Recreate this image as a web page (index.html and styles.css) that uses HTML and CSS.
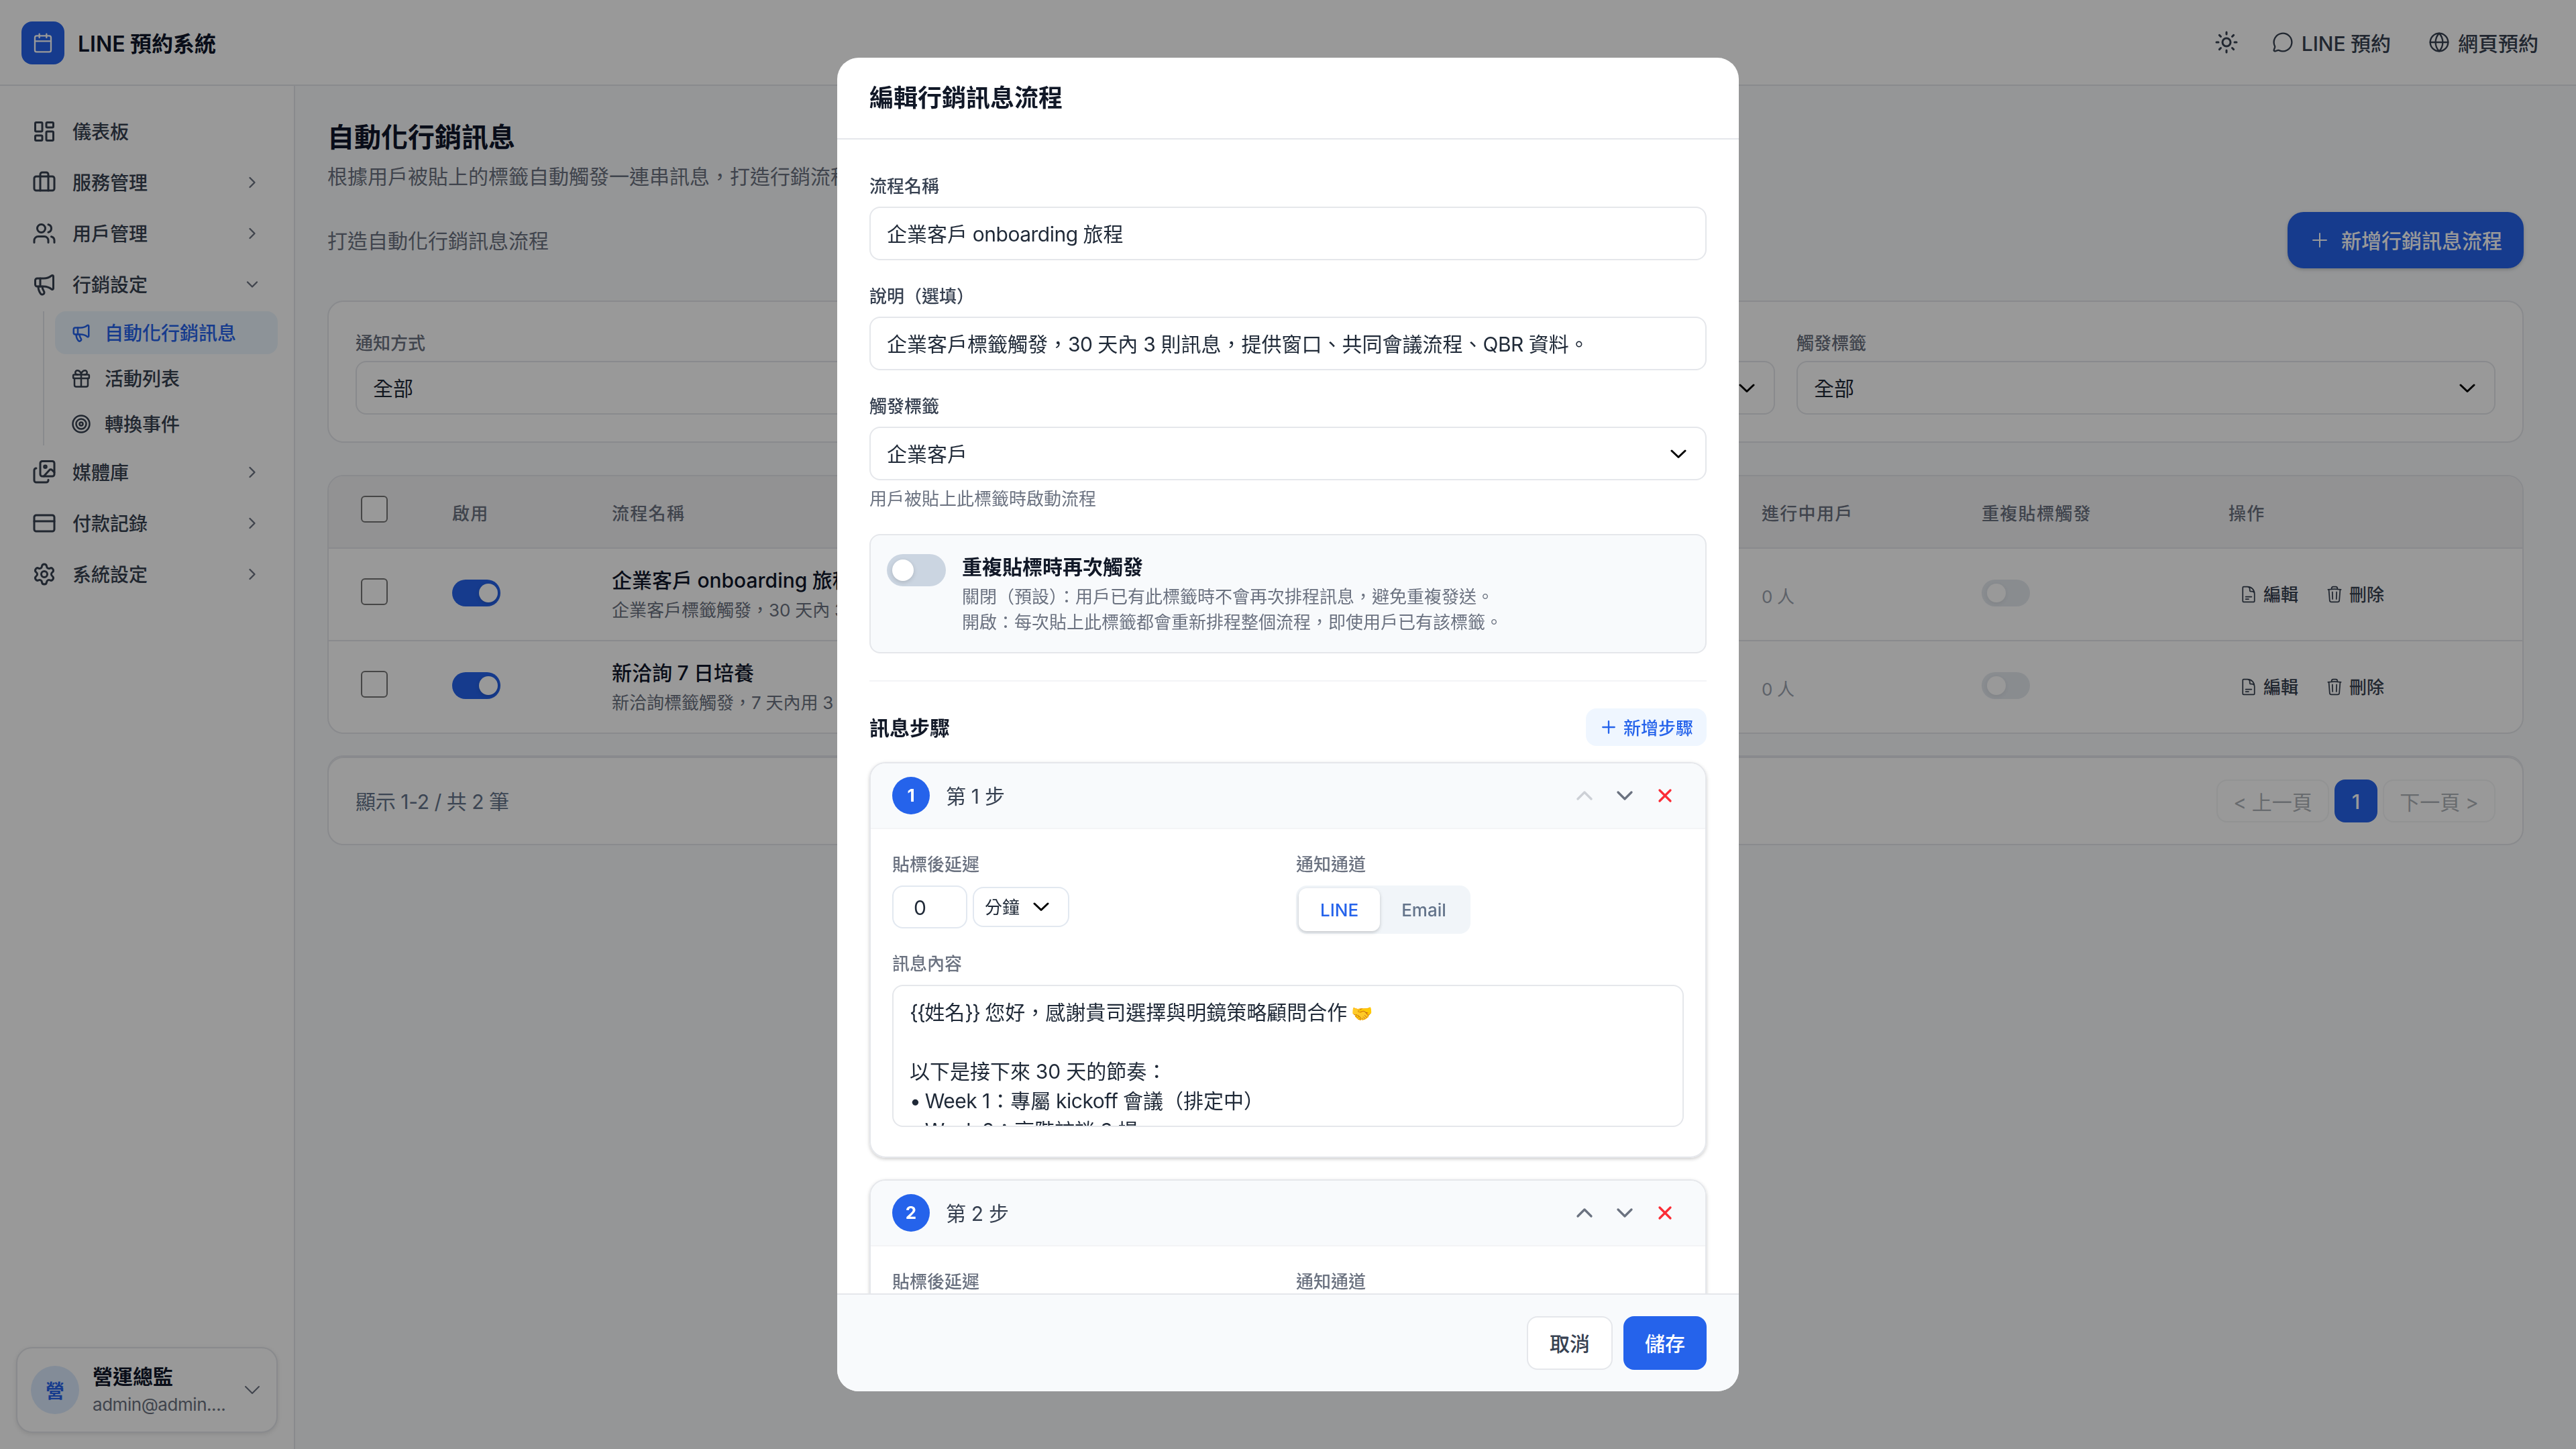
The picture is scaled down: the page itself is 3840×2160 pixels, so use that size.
FILE: index.html
```html
<!DOCTYPE html>
<html lang="zh-Hant">
<head>
    <meta charset="UTF-8">
    <meta name="viewport" content="width=device-width, initial-scale=1.0">
    <title>LINE 預約系統</title>
    <link rel="stylesheet" href="styles.css">
</head>
<body>
    <!-- icons -->
    <svg class="sprite" xmlns="http://www.w3.org/2000/svg">
        <symbol id="i-calendar" viewBox="0 0 24 24"><path d="M8 2v4M16 2v4M3 10h18"/><rect x="3" y="4" width="18" height="18" rx="2"/></symbol>
        <symbol id="i-dashboard" viewBox="0 0 24 24"><rect x="3" y="3" width="7" height="9" rx="1"/><rect x="14" y="3" width="7" height="5" rx="1"/><rect x="14" y="12" width="7" height="9" rx="1"/><rect x="3" y="16" width="7" height="5" rx="1"/></symbol>
        <symbol id="i-luggage" viewBox="0 0 24 24"><path d="M16 20V4a2 2 0 0 0-2-2h-4a2 2 0 0 0-2 2v16"/><rect x="2" y="6" width="20" height="14" rx="2"/></symbol>
        <symbol id="i-users" viewBox="0 0 24 24"><path d="M16 21v-2a4 4 0 0 0-4-4H6a4 4 0 0 0-4 4v2"/><circle cx="9" cy="7" r="4"/><path d="M22 21v-2a4 4 0 0 0-3-3.87M16 3.13a4 4 0 0 1 0 7.75"/></symbol>
        <symbol id="i-megaphone" viewBox="0 0 24 24"><path d="M11 6a13 13 0 0 0 8.4-2.8A1 1 0 0 1 21 4v12a1 1 0 0 1-1.6.8A13 13 0 0 0 11 14H5a2 2 0 0 1-2-2V8a2 2 0 0 1 2-2z"/><path d="M6 14a12 12 0 0 0 2.4 7.2 2 2 0 0 0 3.2-2.4A8 8 0 0 1 10 14M8 6v8"/></symbol>
        <symbol id="i-gift" viewBox="0 0 24 24"><rect x="2.5" y="7.5" width="19" height="4.5" rx="1"/><path d="M12 7.5V22M20 12v8a2 2 0 0 1-2 2H6a2 2 0 0 1-2-2v-8M7.5 7.5a2.5 2.5 0 0 1 0-5C10 2.5 12 5 12 7.5c0-2.5 2-5 4.5-5a2.5 2.5 0 0 1 0 5"/></symbol>
        <symbol id="i-target" viewBox="0 0 24 24"><circle cx="12" cy="12" r="10"/><circle cx="12" cy="12" r="6"/><circle cx="12" cy="12" r="2"/></symbol>
        <symbol id="i-images" viewBox="0 0 24 24"><rect x="8" y="1" width="14" height="15" rx="2"/><path d="m11.5 16 5.6-6.2a1.8 1.8 0 0 1 2.6 0L22 12"/><circle cx="13" cy="6.5" r="1.2"/><path d="M4 8a2 2 0 0 0-2 2v10a2 2 0 0 0 2 2h10a2 2 0 0 0 2-2v-.5"/></symbol>
        <symbol id="i-card" viewBox="0 0 24 24"><rect x="2" y="4" width="20" height="16" rx="2"/><path d="M2 10h20"/></symbol>
        <symbol id="i-gear" viewBox="0 0 24 24"><path d="M9.671 4.136a2.34 2.34 0 0 1 4.659 0 2.34 2.34 0 0 0 3.319 1.915 2.34 2.34 0 0 1 2.33 4.033 2.34 2.34 0 0 0 0 3.831 2.34 2.34 0 0 1-2.33 4.033 2.34 2.34 0 0 0-3.319 1.915 2.34 2.34 0 0 1-4.659 0 2.34 2.34 0 0 0-3.32-1.915 2.34 2.34 0 0 1-2.33-4.033 2.34 2.34 0 0 0 0-3.831A2.34 2.34 0 0 1 6.35 6.051a2.34 2.34 0 0 0 3.319-1.915"/><circle cx="12" cy="12" r="3"/></symbol>
        <symbol id="i-right" viewBox="0 0 24 24"><path d="m9 18 6-6-6-6"/></symbol>
        <symbol id="i-down" viewBox="0 0 24 24"><path d="m6 9 6 6 6-6"/></symbol>
        <symbol id="i-sun" viewBox="0 0 24 24"><circle cx="12" cy="12" r="4"/><path d="M12 2v2M12 20v2M4.93 4.93l1.41 1.41M17.66 17.66l1.41 1.41M2 12h2M20 12h2M6.34 17.66l-1.41 1.41M19.07 4.93l-1.41 1.41"/></symbol>
        <symbol id="i-chat" viewBox="0 0 24 24"><path d="M2.992 16.342a2 2 0 0 1 .094 1.167l-1.065 3.29a1 1 0 0 0 1.236 1.168l3.413-.998a2 2 0 0 1 1.099.092 10 10 0 1 0-4.777-4.719"/></symbol>
        <symbol id="i-globe" viewBox="0 0 24 24"><circle cx="12" cy="12" r="10"/><path d="M12 2a14.5 14.5 0 0 0 0 20 14.5 14.5 0 0 0 0-20M2 12h20"/></symbol>
        <symbol id="i-plus" viewBox="0 0 24 24"><path d="M12 4.5v15m7.5-7.5h-15"/></symbol>
        <symbol id="i-wide-down" viewBox="0 0 24 24"><path d="m19.5 8.25-7.5 7.5-7.5-7.5"/></symbol>
        <symbol id="i-wide-up" viewBox="0 0 24 24"><path d="m4.5 15.75 7.5-7.5 7.5 7.5"/></symbol>
        <symbol id="i-x" viewBox="0 0 24 24"><path d="M6 18 18 6M6 6l12 12"/></symbol>
        <symbol id="i-doc" viewBox="0 0 24 24"><path d="M19.5 14.25v-2.625a3.375 3.375 0 0 0-3.375-3.375h-1.5A1.125 1.125 0 0 1 13.5 7.125v-1.5a3.375 3.375 0 0 0-3.375-3.375H8.25m0 12.75h7.5m-7.5 3H12M10.5 2.25H5.625c-.621 0-1.125.504-1.125 1.125v17.25c0 .621.504 1.125 1.125 1.125h12.75c.621 0 1.125-.504 1.125-1.125V11.25a9 9 0 0 0-9-9Z"/></symbol>
        <symbol id="i-trash" viewBox="0 0 24 24"><path d="m14.74 9-.346 9m-4.788 0L9.26 9m9.968-3.21c.342.052.682.107 1.022.166m-1.022-.165L18.16 19.673a2.25 2.25 0 0 1-2.244 2.077H8.084a2.25 2.25 0 0 1-2.244-2.077L4.772 5.79m14.456 0a48.108 48.108 0 0 0-3.478-.397m-12 .562c.34-.059.68-.114 1.022-.165m0 0a48.11 48.11 0 0 1 3.478-.397m7.5 0v-.916c0-1.18-.91-2.164-2.09-2.201a51.964 51.964 0 0 0-3.32 0c-1.18.037-2.09 1.022-2.09 2.201v.916m7.5 0a48.667 48.667 0 0 0-7.5 0"/></symbol>
        <symbol id="i-arrow" viewBox="0 0 24 14"><path d="m2 2 10 9.5L22 2"/></symbol>
    </svg>

    <header class="topbar">
        <div class="brand">
            <div class="brand-logo"><svg class="icon s32"><use href="#i-calendar"/></svg></div>
            <span class="shift">LINE 預約系統</span>
        </div>
        <div class="top-links">
            <div class="theme-btn"><svg class="icon s36"><use href="#i-sun"/></svg></div>
            <a class="top-link"><svg class="icon s32"><use href="#i-chat"/></svg><span class="shift">LINE 預約</span></a>
            <a class="top-link"><svg class="icon s32"><use href="#i-globe"/></svg><span class="shift">網頁預約</span></a>
        </div>
    </header>

    <div class="layout">
        <aside class="sidebar">
            <nav class="nav">
                <a class="nav-item"><svg class="icon s36"><use href="#i-dashboard"/></svg><span>儀表板</span></a>
                <a class="nav-item"><svg class="icon s36"><use href="#i-luggage"/></svg><span>服務管理</span><svg class="icon s28 caret"><use href="#i-right"/></svg></a>
                <a class="nav-item"><svg class="icon s36"><use href="#i-users"/></svg><span>用戶管理</span><svg class="icon s28 caret"><use href="#i-right"/></svg></a>
                <a class="nav-item"><svg class="icon s36"><use href="#i-megaphone"/></svg><span>行銷設定</span><svg class="icon s28 caret"><use href="#i-down"/></svg></a>
                <div class="subnav">
                    <a class="sub-item active"><svg class="icon s30"><use href="#i-megaphone"/></svg><span>自動化行銷訊息</span></a>
                    <a class="sub-item"><svg class="icon s30"><use href="#i-gift"/></svg><span>活動列表</span></a>
                    <a class="sub-item"><svg class="icon s30"><use href="#i-target"/></svg><span>轉換事件</span></a>
                </div>
                <a class="nav-item"><svg class="icon s36"><use href="#i-images"/></svg><span>媒體庫</span><svg class="icon s28 caret"><use href="#i-right"/></svg></a>
                <a class="nav-item"><svg class="icon s36"><use href="#i-card"/></svg><span>付款記錄</span><svg class="icon s28 caret"><use href="#i-right"/></svg></a>
                <a class="nav-item"><svg class="icon s36"><use href="#i-gear"/></svg><span>系統設定</span><svg class="icon s28 caret"><use href="#i-right"/></svg></a>
            </nav>
            <div class="user-card">
                <div class="avatar">營</div>
                <div class="user-info">
                    <div class="user-name">營運總監</div>
                    <div class="user-mail">admin@admin....</div>
                </div>
                <svg class="icon s32 thin caret"><use href="#i-wide-down"/></svg>
            </div>
        </aside>

        <main class="main">
            <div class="page-head">
                <h1>自動化行銷訊息</h1>
                <p>根據用戶被貼上的標籤自動觸發一連串訊息，打造行銷流程</p>
            </div>
            <div class="toolbar">
                <p>打造自動化行銷訊息流程</p>
                <button class="btn-new"><svg class="icon s32 thin"><use href="#i-plus"/></svg><span>新增行銷訊息流程</span></button>
            </div>

            <section class="card filters">
                <div class="filter">
                    <label>通知方式</label>
                    <div class="select">全部<svg class="arrow"><use href="#i-arrow"/></svg></div>
                </div>
                <div class="filter">
                    <label></label>
                    <div class="select"><span></span><svg class="arrow"><use href="#i-arrow"/></svg></div>
                </div>
                <div class="filter">
                    <label>觸發標籤</label>
                    <div class="select">全部<svg class="arrow"><use href="#i-arrow"/></svg></div>
                </div>
            </section>

            <section class="card table">
                <div class="tr thead">
                    <div class="checkbox"></div>
                    <div>啟用</div>
                    <div>流程名稱</div>
                    <div>進行中用戶</div>
                    <div>重複貼標觸發</div>
                    <div>操作</div>
                </div>
                <div class="tr">
                    <div class="checkbox"></div>
                    <div class="toggle on"></div>
                    <div>
                        <div class="flow-name">企業客戶 onboarding 旅程</div>
                        <div class="flow-desc">企業客戶標籤觸發，30 天內 3 則訊息</div>
                    </div>
                    <div class="count">0 人</div>
                    <div class="toggle disabled"></div>
                    <div class="actions">
                        <a><svg class="icon s28 thin"><use href="#i-doc"/></svg>編輯</a>
                        <a><svg class="icon s28 thin"><use href="#i-trash"/></svg>刪除</a>
                    </div>
                </div>
                <div class="tr">
                    <div class="checkbox"></div>
                    <div class="toggle on"></div>
                    <div>
                        <div class="flow-name">新洽詢 7 日培養</div>
                        <div class="flow-desc">新洽詢標籤觸發，7 天內用 3 則訊息</div>
                    </div>
                    <div class="count">0 人</div>
                    <div class="toggle disabled"></div>
                    <div class="actions">
                        <a><svg class="icon s28 thin"><use href="#i-doc"/></svg>編輯</a>
                        <a><svg class="icon s28 thin"><use href="#i-trash"/></svg>刪除</a>
                    </div>
                </div>
            </section>

            <section class="card pager">
                <span class="total">顯示 1-2 / 共 2 筆</span>
                <div class="pages">
                    <a class="page off">&lt; 上一頁</a>
                    <a class="page current">1</a>
                    <a class="page off">下一頁 &gt;</a>
                </div>
            </section>
        </main>
    </div>

    <div class="overlay">
        <div class="modal">
            <div class="modal-head">編輯行銷訊息流程</div>
            <div class="modal-body">
                <div class="field">
                    <label>流程名稱</label>
                    <div class="input"><span>企業客戶 <span class="latin">onboarding</span> 旅程</span></div>
                </div>
                <div class="field">
                    <label>說明（選填）</label>
                    <div class="input"><span>企業客戶標籤觸發，<span class="latin">30</span> 天內 3 則訊息，提供窗口、共同會議流程、<span class="latin">QBR</span> 資料。</span></div>
                </div>
                <div class="field">
                    <label>觸發標籤</label>
                    <div class="select">企業客戶<svg class="arrow"><use href="#i-arrow"/></svg></div>
                    <p class="hint">用戶被貼上此標籤時啟動流程</p>
                </div>
                <div class="repeat-box">
                    <div class="toggle big"></div>
                    <div>
                        <div class="repeat-title">重複貼標時再次觸發</div>
                        <p>關閉（預設）：用戶已有此標籤時不會再次排程訊息，避免重複發送。</p>
                        <p>開啟：每次貼上此標籤都會重新排程整個流程，即使用戶已有該標籤。</p>
                    </div>
                </div>
                <div class="steps-head">
                    <h2>訊息步驟</h2>
                    <button class="btn-step"><svg class="icon s28"><use href="#i-plus"/></svg><span>新增步驟</span></button>
                </div>

                <div class="step">
                    <div class="step-head">
                        <span class="step-no">1</span>
                        <span class="step-title">第 1 步</span>
                        <div class="step-tools">
                            <a class="off"><svg class="icon s32"><use href="#i-wide-up"/></svg></a>
                            <a><svg class="icon s32"><use href="#i-wide-down"/></svg></a>
                            <a class="del"><svg class="icon s32"><use href="#i-x"/></svg></a>
                        </div>
                    </div>
                    <div class="step-body">
                        <div class="step-grid">
                            <div>
                                <label>貼標後延遲</label>
                                <div class="delay">
                                    <div class="num">0</div>
                                    <div class="unit">分鐘<svg class="arrow"><use href="#i-arrow"/></svg></div>
                                </div>
                            </div>
                            <div>
                                <label>通知通道</label>
                                <div class="tabs"><span class="tab active">LINE</span><span class="tab">Email</span></div>
                            </div>
                        </div>
                        <label>訊息內容</label>
                        <div class="textarea"><span class="braces">{{</span>姓名<span class="braces">}}</span> 您好，感謝貴司選擇與明鏡策略顧問合作 <span class="emoji">🤝</span>

以下是接下來 30 天的節奏：
<span class="bullet">•</span> <span class="latin">Week</span> 1：專屬 <span class="latin">kickoff</span> 會議（排定中）
<span class="bullet">•</span> <span class="latin">Week</span> 2：高階訪談 3 場</div>
                    </div>
                </div>

                <div class="step">
                    <div class="step-head">
                        <span class="step-no">2</span>
                        <span class="step-title">第 2 步</span>
                        <div class="step-tools">
                            <a><svg class="icon s32"><use href="#i-wide-up"/></svg></a>
                            <a><svg class="icon s32"><use href="#i-wide-down"/></svg></a>
                            <a class="del"><svg class="icon s32"><use href="#i-x"/></svg></a>
                        </div>
                    </div>
                    <div class="step-body">
                        <div class="step-grid">
                            <div><label>貼標後延遲</label></div>
                            <div><label>通知通道</label></div>
                        </div>
                    </div>
                </div>
            </div>
            <div class="modal-foot">
                <button class="btn-cancel">取消</button>
                <button class="btn-save">儲存</button>
            </div>
        </div>
    </div>
</body>
</html>
```

FILE: styles.css
```css
* {
    box-sizing: border-box;
    margin: 0;
    padding: 0;
}

body {
    width: 3840px;
    height: 2160px;
    overflow: hidden;
    font-family: Inter, 'Noto Sans CJK TC', sans-serif;
    font-size: 30px;
    line-height: 1.5;
    word-spacing: -0.6px;
    color: #1f2937;
    background: #f8fafc;
}

button {
    font: inherit;
    border: none;
    cursor: pointer;
}

.sprite {
    display: none;
}

.icon {
    fill: none;
    stroke: currentColor;
    stroke-width: 2;
    stroke-linecap: round;
    stroke-linejoin: round;
    flex-shrink: 0;
}

.thin { stroke-width: 1.5; }
.s28 { width: 28px; height: 28px; }
.s30 { width: 30px; height: 30px; }
.s32 { width: 32px; height: 32px; }
.s36 { width: 36px; height: 36px; }

.latin { letter-spacing: -0.5px; }
.braces { letter-spacing: -1.7px; }
.bullet { margin-right: -2px; }
.emoji { margin-left: -2px; font-size: 26px; line-height: 1; }

/* top bar */
.topbar {
    display: flex;
    justify-content: space-between;
    align-items: center;
    height: 128px;
    padding: 0 32px;
    background: #fff;
    border-bottom: 2px solid #e5e7eb;
}

.brand {
    display: flex;
    align-items: center;
    gap: 20px;
    padding-top: 2px;
    font-size: 32px;
    font-weight: 600;
    color: #0f172a;
}

.brand-logo {
    display: flex;
    align-items: center;
    justify-content: center;
    width: 64px;
    height: 64px;
    border-radius: 16px;
    background: #2563eb;
    color: #fff;
}

.brand-logo .icon {
    stroke-width: 1.75;
}

.top-links {
    display: flex;
    align-items: center;
    gap: 8px;
    color: #374151;
    font-weight: 500;
}

.theme-btn {
    display: flex;
    padding: 18px;
}

.top-link {
    display: flex;
    align-items: center;
    gap: 12px;
    padding: 0 24px;
}

.top-link .icon {
    stroke-width: 1.75;
}

.shift {
    padding-top: 4px;
}

/* sidebar */
.layout {
    display: flex;
    height: 2032px;
}

.sidebar {
    display: flex;
    flex-direction: column;
    justify-content: space-between;
    width: 440px;
    padding: 32px 24px 24px;
    background: #fff;
    border-right: 2px solid #e5e7eb;
}

.nav {
    display: flex;
    flex-direction: column;
    gap: 4px;
}

.nav-item, .sub-item {
    display: flex;
    align-items: center;
    gap: 24px;
    height: 72px;
    padding: 0 24px;
    font-size: 28px;
    font-weight: 500;
    color: #374151;
}

.nav-item span, .sub-item span {
    padding-top: 2px;
}

.caret {
    margin-left: auto;
    color: #6b7280;
}

.subnav {
    display: flex;
    flex-direction: column;
    gap: 4px;
    margin-left: 40px;
    padding-left: 16px;
    border-left: 2px solid #e5e7eb;
}

.sub-item {
    gap: 20px;
    height: 64px;
    border-radius: 16px;
}

.sub-item.active {
    background: #ecf6fd;
    color: #2563eb;
}

.user-card {
    display: flex;
    align-items: center;
    gap: 20px;
    height: 128px;
    padding: 0 20px;
    border: 2px solid #e5e7eb;
    border-radius: 24px;
    background: #fff;
    box-shadow: 0 2px 6px rgba(0, 0, 0, 0.1);
}

.user-card .caret {
    margin-left: 0;
}

.avatar {
    flex-shrink: 0;
    width: 72px;
    height: 72px;
    border-radius: 50%;
    background: #dbeafe;
    color: #2563eb;
    font-size: 28px;
    font-weight: 600;
    line-height: 76px;
    text-align: center;
}

.user-info {
    flex: 1;
    min-width: 0;
    padding-top: 4px;
}

.user-name {
    font-weight: 600;
    line-height: 40px;
    color: #0f172a;
}

.user-mail {
    font-size: 26px;
    line-height: 44px;
    letter-spacing: -0.45px;
    white-space: nowrap;
    color: #6b7280;
}

/* main page */
.main {
    flex: 1;
    padding: 48px 78px 48px 48px;
}

.page-head {
    height: 140px;
    color: #6b7280;
}

.page-head h1 {
    font-size: 40px;
    font-weight: 600;
    line-height: 57px;
    color: #0f172a;
    margin-bottom: 8px;
}

.toolbar {
    display: flex;
    justify-content: space-between;
    align-items: center;
    height: 84px;
    margin-bottom: 48px;
    color: #6b7280;
}

.toolbar p {
    padding-top: 3px;
}

.btn-new {
    display: flex;
    align-items: center;
    gap: 16px;
    height: 84px;
    padding: 0 32px;
    border-radius: 24px;
    background: #2563eb;
    color: #fff;
    font-weight: 500;
    box-shadow: 0 2px 6px rgba(0, 0, 0, 0.1), 0 2px 4px rgba(0, 0, 0, 0.1);
}

.btn-new span, .btn-step span {
    padding-top: 2px;
}

.card {
    background: #fff;
    border: 2px solid #e5e7eb;
    border-radius: 24px;
}

.filters {
    display: grid;
    grid-template-columns: repeat(3, 1fr);
    gap: 32px;
    padding: 40px;
    margin-bottom: 48px;
}

.filter label {
    display: block;
    height: 48px;
    font-size: 26px;
    font-weight: 500;
    line-height: 43px;
    color: #6b7280;
}

.select, .input {
    display: flex;
    justify-content: space-between;
    align-items: center;
    height: 80px;
    padding: 2px 24px 0;
    border: 2px solid #e5e7eb;
    border-radius: 16px;
    background: #fff;
}

.select {
    padding-right: 28px;
}

.arrow {
    width: 24px;
    height: 14px;
    fill: none;
    stroke: #000;
    stroke-width: 3;
    stroke-linecap: round;
    stroke-linejoin: round;
}

.table {
    margin-bottom: 32px;
    overflow: hidden;
}

.tr {
    display: grid;
    grid-template-columns: 136px 238px 1714px 328px 368px 1fr;
    align-items: center;
    height: 138px;
    padding-left: 48px;
    border-bottom: 2px solid #e5e7eb;
}

.tr:last-child {
    height: 136px;
    border-bottom: none;
}

.thead {
    height: 108px;
    background: #f3f4f6;
    font-size: 26px;
    font-weight: 500;
    letter-spacing: 1.3px;
    color: #6b7280;
}

.thead > div {
    padding-top: 4px;
}

.tr .checkbox {
    width: 40px;
    height: 40px;
    margin-bottom: 9px;
    border: 2px solid #767676;
    border-radius: 6px;
    background: #fff;
}

.toggle {
    width: 72px;
    height: 40px;
    padding: 6px 8px;
    border-radius: 20px;
    background: #cbd5e1;
    margin-bottom: 4px;
}

.toggle::before {
    content: '';
    display: block;
    width: 28px;
    height: 28px;
    border-radius: 50%;
    background: #fff;
    box-shadow: 0 2px 6px rgba(0, 0, 0, 0.15);
}

.toggle.on {
    padding-left: 40px;
    background: #2563eb;
}

.toggle.disabled {
    opacity: 0.5;
}

.toggle.big {
    flex-shrink: 0;
    width: 88px;
    height: 48px;
    padding: 8px;
    border-radius: 24px;
    margin-top: 4px;
}

.toggle.big::before {
    width: 32px;
    height: 32px;
}

.flow-name {
    padding-top: 2px;
    font-weight: 500;
    color: #0f172a;
    line-height: 46px;
}

.flow-desc {
    font-size: 26px;
    line-height: 44px;
    color: #6b7280;
}

.count {
    padding-top: 6px;
    font-size: 26px;
    color: #9ca3af;
}

.actions {
    display: flex;
    gap: 8px;
    font-size: 26px;
    font-weight: 500;
    color: #374151;
}

.actions a {
    display: flex;
    align-items: center;
    gap: 8px;
    padding: 0 16px;
}

.pager {
    display: flex;
    justify-content: space-between;
    align-items: center;
    height: 134px;
    padding: 2px 40px 0;
    box-shadow: inset 0 2px 0 #e5e7eb;
    color: #64748b;
}

.total {
    padding-top: 2px;
    letter-spacing: -0.2px;
}

.pages {
    display: flex;
    gap: 8px;
}

.page {
    height: 64px;
    min-width: 64px;
    border-radius: 16px;
    line-height: 66px;
    text-align: center;
}

.page.off {
    width: 168px;
    border: 2px solid #e5e7eb;
    line-height: 64px;
    color: #374151;
    opacity: 0.4;
}

.page.current {
    background: #2563eb;
    color: #fff;
    font-weight: 500;
}

/* modal */
.overlay {
    position: fixed;
    inset: 0;
    display: flex;
    align-items: center;
    justify-content: center;
    background: rgba(0, 0, 0, 0.4);
}

.modal {
    display: flex;
    flex-direction: column;
    width: 1344px;
    height: 1988px;
    border-radius: 32px;
    background: #fff;
    overflow: hidden;
}

.modal-head {
    flex-shrink: 0;
    height: 122px;
    padding: 0 48px;
    border-bottom: 2px solid #e5e7eb;
    font-size: 36px;
    font-weight: 700;
    line-height: 120px;
    color: #111827;
}

.modal-body {
    flex: 1;
    padding: 48px 48px 0;
    overflow: hidden;
}

.field {
    margin-bottom: 32px;
}

.field label {
    display: block;
    height: 52px;
    font-size: 26px;
    font-weight: 500;
    line-height: 43px;
    color: #374151;
}

.hint {
    margin-top: 8px;
    font-size: 26px;
    line-height: 40px;
    color: #6b7280;
}

.repeat-box {
    display: flex;
    gap: 24px;
    height: 178px;
    padding: 24px;
    margin-bottom: 40px;
    border: 2px solid #e5e7eb;
    border-radius: 16px;
    background: #f8fafc;
}

.repeat-title {
    margin-bottom: 3px;
    font-weight: 600;
    line-height: 46px;
    color: #111827;
}

.repeat-box p {
    font-size: 26px;
    line-height: 38px;
    color: #6b7280;
}

.steps-head {
    display: flex;
    justify-content: space-between;
    align-items: center;
    padding-top: 40px;
    margin-bottom: 24px;
    border-top: 2px solid #f3f4f6;
}

.steps-head h2 {
    padding-top: 3px;
    font-size: 30px;
    font-weight: 600;
    color: #111827;
}

.btn-step {
    display: flex;
    align-items: center;
    gap: 8px;
    height: 56px;
    padding: 0 20px;
    border-radius: 16px;
    background: #eff6ff;
    color: #2563eb;
    font-size: 26px;
    font-weight: 500;
}

.step {
    height: 590px;
    margin-bottom: 32px;
    border: 2px solid #e5e7eb;
    border-radius: 24px;
    overflow: hidden;
    box-shadow: 0 2px 6px rgba(0, 0, 0, 0.1), 0 2px 4px rgba(0, 0, 0, 0.1);
}

.step-head {
    display: flex;
    align-items: center;
    height: 98px;
    padding: 0 32px;
    border-bottom: 2px solid #f3f4f6;
    background: #f8fafc;
}

.step-no {
    width: 56px;
    height: 56px;
    margin-right: 24px;
    border-radius: 50%;
    background: #2563eb;
    color: #fff;
    font-size: 26px;
    font-weight: 700;
    line-height: 56px;
    text-align: center;
}

.step-title {
    padding-top: 2px;
    color: #374151;
}

.step-tools {
    display: flex;
    gap: 4px;
    margin-left: auto;
    color: #6b7280;
}

.step-tools a {
    display: flex;
    padding: 12px;
}

.step-tools .icon { stroke-width: 2.5; }
.step-tools .off { opacity: 0.3; }
.step-tools .del { color: #fb2c36; }

.step-body {
    padding: 32px;
}

.step-body label {
    display: block;
    height: 52px;
    font-size: 26px;
    font-weight: 500;
    line-height: 42px;
    color: #6b7280;
}

.step-grid {
    display: grid;
    grid-template-columns: 1fr 1fr;
    gap: 24px;
    margin-bottom: 24px;
}

.delay {
    display: flex;
    align-items: center;
    gap: 8px;
}

.num, .unit {
    border: 2px solid #e2e8f0;
    border-radius: 16px;
}

.num {
    width: 112px;
    height: 64px;
    padding-left: 30px;
    line-height: 62px;
}

.unit {
    display: flex;
    justify-content: space-between;
    align-items: center;
    width: 144px;
    height: 60px;
    padding: 0 28px 0 16px;
    font-size: 26px;
}

.tabs {
    display: inline-flex;
    vertical-align: top;
    padding: 4px;
    border-radius: 16px;
    background: #f1f5f9;
    font-size: 26px;
    font-weight: 500;
    line-height: 66px;
    color: #64748b;
}

.tab {
    height: 64px;
    padding: 0 32px;
    border-radius: 12px;
}

.tab.active {
    background: #fff;
    color: #2563eb;
    box-shadow: 0 2px 6px rgba(0, 0, 0, 0.1), 0 2px 4px rgba(0, 0, 0, 0.1);
}

.textarea {
    height: 212px;
    padding: 17px 24px;
    border: 2px solid #e5e7eb;
    border-radius: 16px;
    line-height: 44px;
    white-space: pre-wrap;
    overflow: hidden;
}

.modal-foot {
    display: flex;
    justify-content: flex-end;
    gap: 16px;
    flex-shrink: 0;
    height: 146px;
    padding: 32px 48px;
    border-top: 2px solid #e5e7eb;
    background: #f8fafc;
}

.modal-foot button {
    height: 80px;
    padding-top: 2px;
    border-radius: 16px;
    font-weight: 500;
    color: #374151;
}

.modal-foot .btn-cancel {
    width: 128px;
    border: 2px solid #e5e7eb;
    background: #fff;
}

.modal-foot .btn-save {
    width: 124px;
    background: #2563eb;
    color: #fff;
}
```
